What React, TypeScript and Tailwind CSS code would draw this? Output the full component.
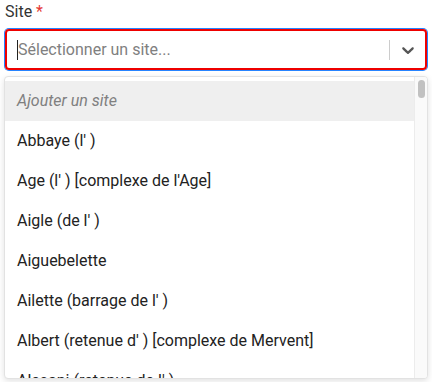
const sites = [
  "Abbaye (l' )",
  "Age (l' ) [complexe de l'Age]",
  "Aigle (de l' )",
  "Aiguebelette",
  "Ailette (barrage de l' )",
  "Albert (retenue d' ) [complexe de Mervent]",
  "Alesani (retenue de l' )",
];

export default function App() {
  return (
    <div className="relative h-[382px] w-[432px] overflow-hidden bg-white font-['Roboto',sans-serif]">
      <div className="px-[5px] pt-[2px]">
        <label className="block text-[16px] leading-[20px] text-[#333]">
          Site <span className="text-[#e53935]">*</span>
        </label>

        <div className="relative mt-[7px]">
          <div className="flex h-[41px] items-center rounded-[4px] border-2 border-[#ee0000] ring-1 ring-[#2684ff]">
            <div className="flex flex-1 items-center pl-[10px]">
              <span className="h-[20px] w-px bg-[#222]" />
              <span className="text-[16px] text-[#808080]">Sélectionner un site...</span>
            </div>
            <span className="h-[20px] w-px bg-[#cccccc]" />
            <div className="flex w-[35px] justify-center text-[#555]">
              <svg width="20" height="20" viewBox="0 0 20 20" fill="currentColor">
                <path d="M4.516 7.548c.436-.446 1.043-.481 1.576 0L10 11.295l3.908-3.747c.533-.481 1.141-.446 1.574 0 .436.445.408 1.197 0 1.615-.406.418-4.695 4.502-4.695 4.502a1.095 1.095 0 0 1-1.576 0S4.924 9.581 4.516 9.163c-.409-.418-.436-1.17 0-1.615z" />
              </svg>
            </div>
          </div>

          <div className="absolute left-[-1px] right-[-1px] top-[47px] flex h-[303px] overflow-hidden rounded-[4px] border border-[#e2e2e2] bg-white shadow-[0_2px_6px_rgba(0,0,0,0.12)]">
            <ul className="flex-1 pt-[4px]">
              <li className="flex h-[40px] items-center bg-[#efefef] px-[12px] text-[16px] italic text-[#808080]">
                Ajouter un site
              </li>
              {sites.map((s) => (
                <li key={s} className="flex h-[40px] items-center px-[12px] text-[16px] text-[#222]">
                  {s}
                </li>
              ))}
            </ul>
            <div className="flex w-[13px] justify-center border-l border-[#ececec] bg-[#fafafa] pt-[3px]">
              <div className="h-[18px] w-[7px] rounded-full bg-[#c1c1c1]" />
            </div>
          </div>
        </div>
      </div>
    </div>
  );
}
